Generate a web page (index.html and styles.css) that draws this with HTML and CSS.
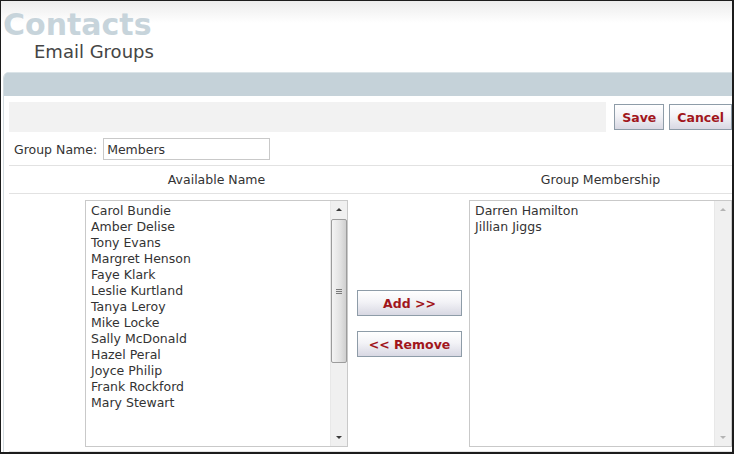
FILE: index.html
```html
<!DOCTYPE html>
<html lang="en">
<head>
  <meta charset="UTF-8">
  <meta name="viewport" content="width=device-width, initial-scale=1.0">
  <title>Contacts - Email Groups</title>
  <link rel="stylesheet" href="styles.css">
</head>
<body>
  <div class="window">
    <!-- Page heading -->
    <header class="page-head">
      <h1 class="app-title">Contacts</h1>
      <h2 class="page-title">Email Groups</h2>
    </header>

    <div class="panel">
      <div class="panel-bar"></div>
      <div class="panel-body">
        <!-- Toolbar -->
        <div class="toolbar">
          <div class="toolbar-fill"></div>
          <div class="toolbar-actions">
            <button type="button" class="btn">Save</button>
            <button type="button" class="btn">Cancel</button>
          </div>
        </div>

        <!-- Group name -->
        <div class="name-row">
          <label for="groupName">Group Name:</label>
          <input type="text" id="groupName" value="Members">
        </div>

        <!-- Column headings -->
        <div class="heads">
          <div class="head-cell">Available Name</div>
          <div class="head-gap"></div>
          <div class="head-cell">Group Membership</div>
        </div>

        <!-- Lists -->
        <div class="lists">
          <div class="list-box">
            <ul class="list-items">
              <li>Carol Bundie</li>
              <li>Amber Delise</li>
              <li>Tony Evans</li>
              <li>Margret Henson</li>
              <li>Faye Klark</li>
              <li>Leslie Kurtland</li>
              <li>Tanya Leroy</li>
              <li>Mike Locke</li>
              <li>Sally McDonald</li>
              <li>Hazel Peral</li>
              <li>Joyce Philip</li>
              <li>Frank Rockford</li>
              <li>Mary Stewart</li>
            </ul>
            <div class="scrollbar">
              <span class="arrow arrow-up"></span>
              <span class="thumb"><span class="grip"></span></span>
              <span class="track"></span>
              <span class="arrow arrow-down"></span>
            </div>
          </div>

          <div class="mover">
            <button type="button" class="btn btn-wide">Add &gt;&gt;</button>
            <button type="button" class="btn btn-wide">&lt;&lt; Remove</button>
          </div>

          <div class="list-box">
            <ul class="list-items">
              <li>Darren Hamilton</li>
              <li>Jillian Jiggs</li>
            </ul>
            <div class="scrollbar scrollbar-off">
              <span class="arrow arrow-up"></span>
              <span class="track"></span>
              <span class="arrow arrow-down"></span>
            </div>
          </div>
        </div>
      </div>
    </div>
  </div>
</body>
</html>
```

FILE: styles.css
```css
body {
  margin: 0;
  font-family: "DejaVu Sans", Verdana, sans-serif;
  font-size: 12.5px;
  color: #333;
  background: #fff;
}
.window {
  width: 734px;
  height: 454px;
  box-sizing: border-box;
  border: 1px solid #1c1c1c;
  border-right-width: 2px;
  border-bottom-width: 2px;
  overflow: hidden;
  background: #fff;
}

/* heading */
.page-head {
  background: linear-gradient(#ececec, #fff 22px);
  padding-top: 8px;
}
.app-title {
  margin: 0;
  padding-left: 2px;
  font-size: 30px;
  line-height: 32px;
  font-weight: bold;
  color: #c7d4db;
}
.page-title {
  margin: 1px 0 0 33px;
  font-size: 18px;
  line-height: 20px;
  font-weight: normal;
  color: #454545;
}

/* panel */
.panel {
  margin: 10px 0 0 2px;
  border-left: 1px solid #d3dce0;
  border-top-left-radius: 6px;
  overflow: hidden;
}
.panel-bar {
  height: 23px;
  border-top: 1px solid #dbe4e8;
  background: #c5d2d9;
}
.panel-body {
  padding: 6px 0 0 5px;
}

/* toolbar */
.toolbar {
  display: flex;
  height: 30px;
}
.toolbar-fill {
  flex: 1;
  background: #f2f2f2;
}
.toolbar-actions {
  display: flex;
  align-items: center;
  gap: 5px;
  padding-left: 8px;
  background: #fff;
}

.btn {
  height: 26px;
  padding: 0 7px;
  border: 1px solid #8e9ca8;
  background: linear-gradient(#ffffff, #f3f3f7 45%, #d8d8e3);
  color: #a1161c;
  font-family: "DejaVu Sans", Verdana, sans-serif;
  font-size: 12.5px;
  font-weight: bold;
  white-space: nowrap;
}
.btn-wide {
  width: 105px;
  padding: 0;
}

/* group name */
.name-row {
  display: flex;
  align-items: center;
  padding: 6px 0 5px 5px;
  border-bottom: 1px solid #e2e2e2;
}
.name-row label {
  margin-right: 6px;
}
.name-row input {
  width: 167px;
  height: 22px;
  box-sizing: border-box;
  padding: 0 3px;
  border: 1px solid #c9c9c9;
  font-family: "DejaVu Sans", Verdana, sans-serif;
  font-size: 12.5px;
  color: #333;
}

/* headings */
.heads {
  display: flex;
  padding-left: 76px;
  line-height: 27px;
  border-bottom: 1px solid #e2e2e2;
}
.head-cell {
  width: 263px;
  text-align: center;
  white-space: nowrap;
}
.head-gap {
  width: 121px;
}

/* lists */
.lists {
  display: flex;
  align-items: center;
  padding: 6px 0 4px 76px;
  border-bottom: 1px solid #e2e2e2;
}
.list-box {
  display: flex;
  width: 263px;
  height: 247px;
  box-sizing: border-box;
  border: 1px solid #c9c9c9;
  background: #fff;
}
.list-items {
  flex: 1;
  margin: 0;
  padding: 2px 0 0 5px;
  list-style: none;
  line-height: 16px;
  white-space: nowrap;
}
.scrollbar {
  display: flex;
  flex-direction: column;
  width: 16px;
  background: #f0f0f0;
  border-left: 1px solid #e8e8e8;
}
.arrow {
  height: 17px;
  display: flex;
  align-items: center;
  justify-content: center;
}
.arrow::after {
  content: "";
  border-left: 3px solid transparent;
  border-right: 3px solid transparent;
}
.arrow-up::after {
  border-bottom: 3px solid #3a3a3a;
}
.arrow-down::after {
  border-top: 3px solid #3a3a3a;
}
.scrollbar-off .arrow-up::after {
  border-bottom-color: #b4b4b4;
}
.scrollbar-off .arrow-down::after {
  border-top-color: #b4b4b4;
}
.thumb {
  height: 144px;
  margin: 1px 0 0 0;
  box-sizing: border-box;
  border: 1px solid #9c9c9c;
  border-radius: 2px;
  background: linear-gradient(90deg, #f4f4f4, #e2e2e2 60%, #cfcfcf);
  display: flex;
  align-items: center;
  justify-content: center;
}
.grip {
  width: 6px;
  height: 5px;
  background: repeating-linear-gradient(#7a7a7a 0 1px, transparent 1px 2px);
}
.track {
  flex: 1;
}

.mover {
  display: flex;
  flex-direction: column;
  gap: 15px;
  margin: 0 7px 0 9px;
}
```
